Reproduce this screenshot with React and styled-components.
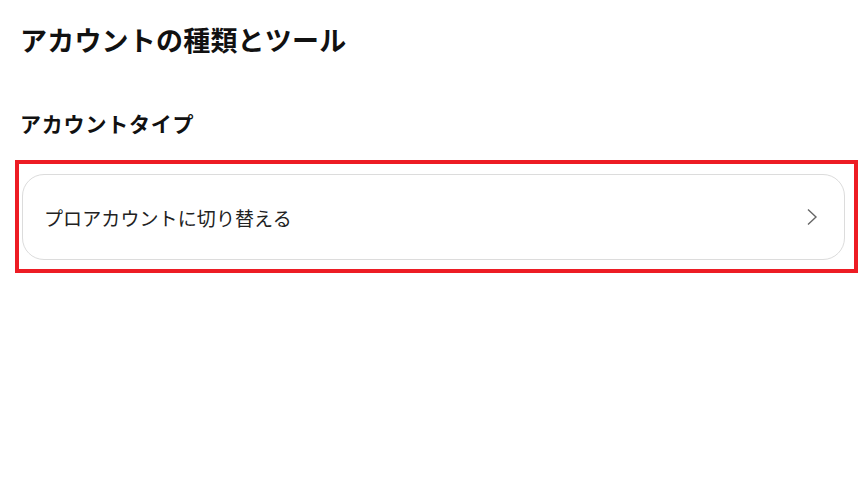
import React from 'react';
import styled, { createGlobalStyle } from 'styled-components';

const GlobalStyle = createGlobalStyle`
  body {
    margin: 0;
    background: #ffffff;
    font-family: "Noto Sans CJK JP", "Noto Sans", sans-serif;
    color: #111111;
  }
`;

const Page = styled.div`
  padding: 22px 9px 0 15px;
`;

const Title = styled.h1`
  margin: 0 0 52px 5px;
  font-size: 27px;
  line-height: 35px;
  font-weight: 700;
  letter-spacing: 0.2px;
`;

const SectionTitle = styled.h2`
  margin: 0 0 23px 5px;
  font-size: 21px;
  line-height: 28px;
  font-weight: 700;
  letter-spacing: 0.8px;
`;

const Highlight = styled.div`
  border: 4px solid #ed1c24;
  padding: 10px 9px 9px 3px;
`;

const Row = styled.button`
  display: flex;
  align-items: center;
  justify-content: space-between;
  width: 100%;
  height: 86px;
  padding: 0 26px 0 21px;
  box-sizing: border-box;
  background: #ffffff;
  border: 1px solid #dcdcdc;
  border-radius: 22px;
  font-family: inherit;
  font-size: 19px;
  color: #222222;
  cursor: pointer;
  text-align: left;
`;

const Label = styled.span`
  letter-spacing: 0.1px;
`;

const Chevron = () => (
  <svg width="12" height="18" viewBox="0 0 12 18" fill="none">
    <path d="M2 1.5 L10 9 L2 16.5" stroke="#666666" strokeWidth="1.4" />
  </svg>
);

export default function App() {
  return (
    <>
      <GlobalStyle />
      <Page>
        <Title>アカウントの種類とツール</Title>
        <SectionTitle>アカウントタイプ</SectionTitle>
        <Highlight>
          <Row>
            <Label>プロアカウントに切り替える</Label>
            <Chevron />
          </Row>
        </Highlight>
      </Page>
    </>
  );
}
